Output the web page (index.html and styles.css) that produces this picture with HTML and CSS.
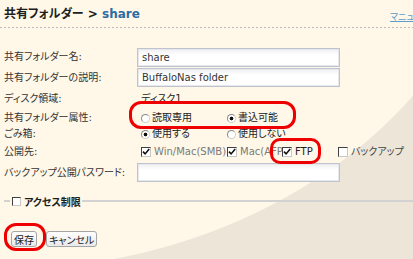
FILE: index.html
```html
<!DOCTYPE html>
<html lang="ja">
<head>
    <meta charset="UTF-8">
    <title>共有フォルダー設定</title>
    <link rel="stylesheet" href="styles.css">
</head>
<body>
<div class="page">
    <div class="title-bar">
        <h1>共有フォルダー <span class="sep">&gt;</span> <span class="folder">share</span></h1>
        <a class="manual" href="#">マニュアル</a>
    </div>
    <div class="rule"></div>

    <form class="settings" id="folderForm">
        <label for="folderName">共有フォルダー名:</label>
        <div class="value"><input class="text" type="text" id="folderName" value="share"></div>

        <label for="folderDesc">共有フォルダーの説明:</label>
        <div class="value"><input class="text" type="text" id="folderDesc" value="BuffaloNas folder"></div>

        <label>ディスク領域:</label>
        <div class="value plain">ディスク1</div>

        <label>共有フォルダー属性:</label>
        <div class="opts">
            <span class="opt w1"><span class="radio"></span>読取専用</span>
            <span class="opt"><span class="radio on"></span>書込可能</span>
        </div>

        <label>ごみ箱:</label>
        <div class="opts">
            <span class="opt w1"><span class="radio on"></span>使用する</span>
            <span class="opt"><span class="radio"></span>使用しない</span>
        </div>

        <label>公開先:</label>
        <div class="opts">
            <span class="opt w1 dim"><span class="box"><svg viewBox="0 0 8 8"><path d="M1 3.6l2.1 2.3L7.2 1"/></svg></span>Win/Mac(SMB)</span>
            <span class="opt w2 dim"><span class="box"><svg viewBox="0 0 8 8"><path d="M1 3.6l2.1 2.3L7.2 1"/></svg></span>Mac(AFP)</span>
            <span class="opt w3"><span class="box"><svg viewBox="0 0 8 8"><path d="M1 3.6l2.1 2.3L7.2 1"/></svg></span>FTP</span>
            <span class="opt soft"><span class="box"></span>バックアップ</span>
        </div>

        <label for="backupPass">バックアップ公開パスワード:</label>
        <div class="value"><input class="text" type="password" id="backupPass"></div>
    </form>

    <div class="access">
        <span class="line short"></span>
        <span class="legend"><span class="box"></span>アクセス制限</span>
        <span class="line"></span>
    </div>

    <div class="actions">
        <button type="submit" form="folderForm" class="save">保存</button>
        <button type="button">キャンセル</button>
    </div>

    <!-- red callouts drawn over the form -->
    <div class="mark mark-attr"></div>
    <div class="mark mark-ftp"></div>
    <div class="mark mark-save"></div>
</div>
</body>
</html>
```

FILE: styles.css
```css
html, body {
    height: 100%;
}
body {
    margin: 0;
    overflow: hidden;
    font-family: "DejaVu Sans", "Noto Sans CJK JP", sans-serif;
    font-size: 10px;
    font-feature-settings: "palt";
    color: #333333;
    background-color: #fff7e7;
    background-image: radial-gradient(510px 420px at 0 -150px, #fff7e7 calc(100% - 1px), #ece5d8 100%);
}
.page {
    position: relative;
    height: 100%;
}
.title-bar {
    display: flex;
    align-items: flex-start;
    height: 27px;
    box-sizing: border-box;
    padding: 6px 0 0 4px;
}
h1 {
    flex: 1;
    margin: 0;
    font-size: 12px;
    line-height: 16px;
    font-weight: bold;
    color: #1e1e1e;
}
.folder {
    color: #2b6ca3;
}
.manual {
    width: 23px;
    overflow: hidden;
    white-space: nowrap;
    margin-top: 5px;
    font-size: 9px;
    line-height: 12px;
    color: #5a9ccc;
    text-decoration: underline;
}
.rule {
    height: 1px;
    background: repeating-linear-gradient(90deg, #bdbdbd 0 2px, transparent 2px 4px);
}
.settings {
    display: grid;
    grid-template-columns: 133px 1fr;
    grid-template-rows: 20px 21px 22px 16px 16px 20px 21px;
    align-items: center;
    margin: 19px 0 0 4px;
    line-height: 12px;
}
.settings label {
    color: #333333;
}
.value.plain {
    padding-left: 4px;
    color: #222222;
}
input.text {
    display: block;
    box-sizing: border-box;
    width: 203px;
    height: 19px;
    padding: 0 4px;
    border: 1px solid #bfc3cd;
    box-shadow: inset 0 0 0 1px #e6e8ee;
    background: linear-gradient(#efefef, #ffffff 6px);
    font: 10px "DejaVu Sans", "Noto Sans CJK JP", sans-serif;
    color: #333333;
}
.opts {
    display: flex;
    align-items: center;
    padding-left: 4px;
}
.opt {
    display: flex;
    align-items: center;
    white-space: nowrap;
    color: #222222;
}
.opt.w1 {
    width: 86px;
}
.opt.w2 {
    width: 55px;
}
.opt.w3 {
    width: 56px;
}
.opt.dim {
    color: #7a7a7a;
}
.opt.soft {
    color: #444444;
}
.radio {
    position: relative;
    width: 9px;
    height: 9px;
    box-sizing: border-box;
    margin-right: 2px;
    border-radius: 50%;
    border: 1px solid #8a8a8a;
    border-bottom-color: #d0d0d0;
    border-right-color: #d0d0d0;
    background: #ffffff;
}
.radio.on {
    background: radial-gradient(circle, #111111 1.6px, #ffffff 2.2px);
}
.box {
    display: flex;
    align-items: center;
    justify-content: center;
    width: 10px;
    height: 10px;
    box-sizing: border-box;
    margin-right: 3px;
    border: 1px solid #404040;
    border-bottom-color: #c8c8c8;
    border-right-color: #c8c8c8;
    background: #ffffff;
}
.box svg {
    width: 8px;
    height: 8px;
}
.box path {
    fill: none;
    stroke: #111111;
    stroke-width: 1.6;
}
.access {
    display: flex;
    align-items: center;
    height: 12px;
    margin: 12px 0 0 4px;
}
.access .line {
    flex: 1;
    height: 2px;
    background: #d2d2d2;
}
.access .line.short {
    flex: none;
    width: 6px;
}
.legend {
    display: flex;
    align-items: center;
    padding: 0 1px 0 2px;
    font-weight: bold;
    color: #1e1e1e;
}
.legend .box {
    width: 9px;
    height: 9px;
}
.actions {
    display: flex;
    gap: 9px;
    margin: 24px 0 0 11px;
}
button {
    height: 16px;
    padding: 0 2px;
    border: 1px solid #a5a5a5;
    border-radius: 3px;
    background: linear-gradient(#ffffff, #e9e9e9);
    font: 10px "DejaVu Sans", "Noto Sans CJK JP", sans-serif;
    font-feature-settings: "palt";
    color: #222222;
}
.mark {
    position: absolute;
    box-sizing: border-box;
    border: 3px solid #ee0000;
}
.mark-attr {
    left: 129px;
    top: 101px;
    width: 167px;
    height: 28px;
    border-radius: 12px;
}
.mark-ftp {
    left: 270px;
    top: 138px;
    width: 51px;
    height: 26px;
    border-radius: 10px;
}
.mark-save {
    left: 4px;
    top: 223px;
    width: 42px;
    height: 28px;
    border-radius: 12px;
}
```
